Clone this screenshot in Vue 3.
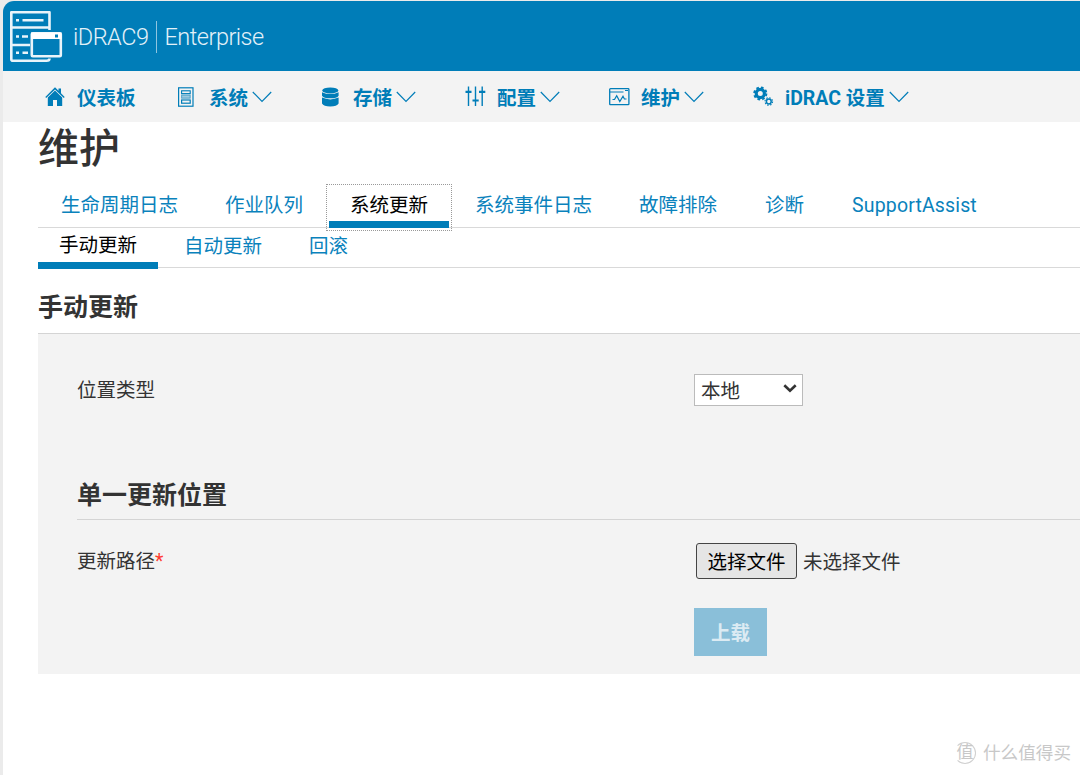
<template>
  <div class="idrac-page">
    <header class="app-header">
      <svg class="logo" viewBox="0 0 54 54" width="54" height="54" fill="none" stroke="#e9f4fa" stroke-width="2.6">
        <path d="M20 17.5H2.3V2.3H40.5V20M2.3 17.5V35H21M2.3 35V49.2Q2.3 50.7 4 50.7H37.5Q40.5 50.7 40.5 48.5M20 17.5H40.5" stroke-linejoin="round" />
        <path d="M7 10.3H10M13.5 10.3H34.5M7 26.5H10M13 26.5H19M7 42.7H10M13.5 42.7H19" stroke-width="2.4" />
        <rect x="22.8" y="23.3" width="29" height="23" rx="1" fill="#007db8" />
        <path d="M22 22.5H52.5V29H22Z" fill="#fff" stroke="none" />
        <path d="M46 24.5h3v3h-3z" fill="#007db8" stroke="none" />
      </svg>
      <span class="product">iDRAC9</span>
      <span class="edition">Enterprise</span>
    </header>

    <nav class="main-nav">
      <a v-for="item in navItems" :key="item.icon" class="nav-item">
        <span class="nav-icon">
          <svg v-if="item.icon === 'home'" width="20" height="20" viewBox="0 0 20 20" fill="currentColor">
            <path d="M10 .3L13.5 3.8V1.5H16V6.2L19.7 10L18.8 10.9L10 2.5L1.2 10.9L.3 10Z" />
            <path d="M10 3.6L17.2 10.4V19H12V13H8V19H2.8V10.4Z" />
          </svg>
          <svg v-else-if="item.icon === 'system'" width="18" height="20" viewBox="0 0 18 20" fill="none" stroke="currentColor">
            <rect x="1.6" y=".8" width="14.4" height="18.4" stroke-width="1.2" />
            <rect x="4.6" y="3.8" width="8.6" height="2.8" stroke-width="1.1" />
            <rect x="4.6" y="8" width="8.6" height="3.2" stroke-width="1" fill="#007db8" fill-opacity=".35" stroke-opacity=".6" />
            <rect x="4.6" y="13" width="8.6" height="3.2" stroke-width="1.2" />
          </svg>
          <svg v-else-if="item.icon === 'storage'" width="20" height="20" viewBox="0 0 20 20" fill="currentColor">
            <ellipse cx="9.3" cy="3.4" rx="8" ry="3" />
            <path d="M1 5.2Q9.3 9 17.6 5.2V8.7Q16 11.3 9.3 11.3T1 8.7ZM1 10.6Q9.3 14.2 17.6 10.6V16.5Q16 19.5 9.3 19.5T1 16.5Z" />
          </svg>
          <svg v-else-if="item.icon === 'config'" width="21" height="21" viewBox="0 0 21 21" fill="none" stroke="currentColor">
            <path d="M3.5 .5V20M10.5 .5V20M17.2 .5V20" stroke-width="1.4" />
            <path d="M.5 5.8H6.5M7.5 14.5H13.7M14 5.8H20.3" stroke-width="2.2" />
          </svg>
          <svg v-else-if="item.icon === 'maintenance'" width="21" height="18" viewBox="0 0 21 18" fill="none" stroke="currentColor">
            <rect x=".7" y=".7" width="19.2" height="16" rx=".8" stroke-width="1.3" />
            <path d="M1 4H14.5M16 2.5H19" stroke-width="1" />
            <path d="M3.5 11.5H5.5L7.7 7.7L10.8 13.5L14 8.3L15.4 11H17.5" stroke-width="1.2" />
          </svg>
          <svg v-else width="21" height="21" viewBox="0 0 21 21" fill="none" stroke="currentColor">
            <circle cx="7.3" cy="7.5" r="4.1" stroke-width="3.2" />
            <circle cx="7.3" cy="7.5" r="6.1" stroke-width="1.9" stroke-dasharray="2.6 2.19" />
            <circle cx="15.8" cy="15.5" r="2.4" stroke-width="1.5" />
            <circle cx="15.8" cy="15.5" r="3.8" stroke-width="1.1" stroke-dasharray="1.5 1.48" />
          </svg>
        </span>
        <span>{{ item.label }}</span>
        <svg v-if="item.menu" class="chevron" width="20" height="12" viewBox="0 0 20 12">
          <path d="M.8 1L10 10.3L19.2 1" fill="none" stroke="currentColor" stroke-width="1.2" />
        </svg>
      </a>
    </nav>

    <main class="content">
      <h1>维护</h1>

      <div class="tabs">
        <a
          v-for="tab in tabs"
          :key="tab"
          class="tab"
          :class="{ active: tab === activeTab }"
          @click="activeTab = tab"
        >{{ tab }}</a>
      </div>

      <div class="sub-tabs">
        <a
          v-for="tab in subTabs"
          :key="tab"
          class="sub-tab"
          :class="{ active: tab === activeSubTab }"
          @click="activeSubTab = tab"
        >{{ tab }}</a>
      </div>

      <h2>手动更新</h2>

      <section class="panel">
        <div class="row location-row">
          <label class="row-label">位置类型</label>
          <div class="select-box">
            <span>本地</span>
            <svg width="14" height="10" viewBox="0 0 14 10">
              <path d="M1.3 1.3L7 6.8L12.7 1.3" fill="none" stroke="#333" stroke-width="2.6" />
            </svg>
          </div>
        </div>

        <h3>单一更新位置</h3>

        <div class="row file-row">
          <label class="row-label">更新路径<span class="required">*</span></label>
          <button class="file-btn">选择文件</button>
          <span class="file-name">未选择文件</span>
        </div>

        <button class="upload-btn" disabled>上载</button>
      </section>
    </main>

    <div class="watermark">
      <span class="watermark-badge">值</span>
      <span>什么值得买</span>
    </div>
  </div>
</template>

<script setup>
import { ref } from 'vue';

const navItems = [
  { icon: 'home', label: '仪表板', menu: false },
  { icon: 'system', label: '系统', menu: true },
  { icon: 'storage', label: '存储', menu: true },
  { icon: 'config', label: '配置', menu: true },
  { icon: 'maintenance', label: '维护', menu: true },
  { icon: 'settings', label: 'iDRAC 设置', menu: true },
];

const tabs = ['生命周期日志', '作业队列', '系统更新', '系统事件日志', '故障排除', '诊断', 'SupportAssist'];
const subTabs = ['手动更新', '自动更新', '回滚'];

const activeTab = ref('系统更新');
const activeSubTab = ref('手动更新');
</script>

<style>
body {
  margin: 0;
  background: #fff;
}
</style>

<style scoped>
.idrac-page {
  position: relative;
  box-sizing: border-box;
  width: 1080px;
  height: 775px;
  padding-top: 1px;
  border-left: 3px solid #ebebeb;
  overflow: hidden;
  background: linear-gradient(#ebebeb 20px, #fff 20px);
  color: #333;
  font-family: Roboto, "Noto Sans CJK SC", sans-serif;
  font-size: 19.5px;
}

.app-header {
  display: flex;
  align-items: center;
  box-sizing: border-box;
  height: 70px;
  padding: 1px 0 0 6px;
  border-top-left-radius: 11px;
  background: #007db8;
  color: #e3f1f8;
  font-size: 23.5px;
  font-weight: 300;
  letter-spacing: -0.5px;
}

.logo {
  flex: none;
}

.product {
  margin-left: 10px;
  padding-right: 8px;
  border-right: 1px solid #8fc5e0;
  line-height: 32px;
}

.edition {
  margin-left: 7px;
}

.main-nav {
  display: flex;
  height: 51px;
  padding-left: 42px;
  background: #f3f3f3;
}

.nav-item {
  display: flex;
  align-items: center;
  width: 144px;
  color: #007db8;
  font-weight: bold;
  white-space: nowrap;
}

.nav-item:first-child {
  width: 132px;
}

.nav-item:last-child {
  width: auto;
}

.nav-icon {
  display: flex;
  flex: none;
  width: 32px;
}

.chevron {
  flex: none;
  margin-left: 4px;
}

.content {
  padding-left: 35px;
}

h1 {
  height: 62px;
  margin: 0;
  font-size: 41px;
  font-weight: 500;
  line-height: 54px;
}

.tabs,
.sub-tabs {
  display: flex;
  box-sizing: border-box;
  border-bottom: 1px solid #d9d9d9;
  color: #0a82bc;
}

.tabs {
  height: 44px;
  gap: 5px;
  padding-left: 2px;
}

.tab,
.sub-tab {
  box-sizing: border-box;
  height: 43px;
  padding: 0 21px;
  line-height: 44px;
  white-space: nowrap;
  cursor: pointer;
}

.tab:nth-child(n + 6) {
  margin-left: 1px;
}

.tab:last-child {
  letter-spacing: 0.15px;
}

.active {
  border-bottom: 7px solid #007db8;
  color: #000;
}

.tab.active {
  height: 41px;
  margin-top: 3px;
  line-height: 37px;
  outline: 1px dotted #999;
  outline-offset: 2px;
}

.sub-tabs {
  height: 40px;
  gap: 5px;
}

.sub-tab {
  height: 40px;
  line-height: 37px;
}

.sub-tab.active {
  height: 41px;
  line-height: 35px;
}

h2 {
  margin: 0;
  height: 65px;
  font-size: 25px;
  font-weight: bold;
  line-height: 80px;
}

.panel {
  box-sizing: border-box;
  height: 341px;
  padding: 40px 0 0 39px;
  border-top: 1px solid #d4d4d4;
  background: #f3f3f3;
}

.row {
  display: flex;
  align-items: center;
}

.row-label {
  width: 617px;
  padding-bottom: 4px;
}

.location-row {
  height: 32px;
}

.select-box {
  display: flex;
  align-items: center;
  justify-content: space-between;
  box-sizing: border-box;
  width: 109px;
  height: 32px;
  padding: 0 5px 2px 6px;
  border: 1px solid #bbb;
  background: #fff;
}

h3 {
  height: 49px;
  margin: 64px 0 0;
  border-bottom: 1px solid #d4d4d4;
  font-size: 25px;
  line-height: 51px;
}

.file-row {
  height: 36px;
  margin-top: 23px;
}

.required {
  color: #ff3b30;
}

button {
  font-family: inherit;
  font-size: inherit;
}

.file-btn {
  box-sizing: border-box;
  width: 101px;
  height: 36px;
  margin-left: 2px;
  padding: 0 0 2px;
  border: 1px solid #444;
  border-radius: 3px;
  background: #e5e5e5;
  color: #000;
}

.file-name {
  margin-left: 6px;
  padding-bottom: 1px;
}

.upload-btn {
  display: block;
  width: 73px;
  height: 48px;
  margin: 29px 0 0 617px;
  padding: 0 0 2px;
  border: none;
  background: #8abfd9;
  color: #dcebf3;
  font-weight: bold;
}

.watermark {
  position: absolute;
  right: 9px;
  bottom: 10px;
  display: flex;
  align-items: center;
  gap: 7px;
  color: #c8c8c8;
  font-size: 17.6px;
  line-height: 24px;
}

.watermark-badge {
  box-sizing: border-box;
  width: 22px;
  height: 22px;
  border: 1px solid #d0d0d0;
  border-left-color: transparent;
  border-radius: 50%;
  font-size: 17px;
  line-height: 19px;
  text-align: center;
}
</style>
